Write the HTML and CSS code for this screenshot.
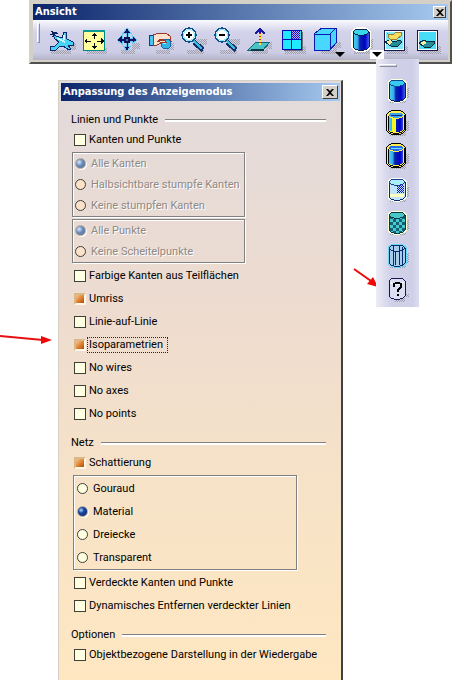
FILE: index.html
```html
<!DOCTYPE html>
<html lang="de">
<head>
  <meta charset="utf-8">
  <title>Anpassung des Anzeigemodus</title>
  <link rel="stylesheet" href="styles.css">
</head>
<body>
  <!-- Shared icon parts -->
  <svg class="defs" width="0" height="0" aria-hidden="true">
    <defs>
      <pattern id="dots" width="2" height="2" patternUnits="userSpaceOnUse">
        <path d="M0 0h1v1h-1zM1 1h1v1h-1z" fill="#a0a0aa"/>
      </pattern>
      <pattern id="checks" width="6" height="6" patternUnits="userSpaceOnUse">
        <path d="M0 0h6v6h-6z" fill="#48c8d0"/>
        <path d="M0 0h3v3h-3zM3 3h3v3h-3z" fill="#146070"/>
      </pattern>
      <pattern id="bluedots" width="2" height="2" patternUnits="userSpaceOnUse">
        <path d="M0 0h1v1h-1zM1 1h1v1h-1z" fill="#1010c8"/>
      </pattern>
      <linearGradient id="steel">
        <stop offset="0" stop-color="#48d8ff"/>
        <stop offset=".3" stop-color="#38a8e8"/>
        <stop offset=".42" stop-color="#0828a8"/>
        <stop offset=".75" stop-color="#0000c8"/>
        <stop offset="1" stop-color="#4060e0"/>
      </linearGradient>
      <path id="shade" d="M22 13h6v10h-3v5h-16v-4h13z" fill="url(#dots)"/>
      <path id="can" d="M8 8l2-2 3-1h6l3 1 2 2v15l-2 2-3 1h-6l-3-1-2-2z"/>
      <path id="rim" d="M8 8l2-2 3-1h6l3 1 2 2-2 2-3 1h-6l-3-1z"/>
    </defs>
  </svg>

  <!-- View toolbar -->
  <div class="toolbar">
    <div class="titlebar">
      <span class="title">Ansicht</span>
      <button class="close" type="button" aria-label="Ansicht schließen"><svg width="8" height="7" viewBox="0 0 8 7"><path d="M0 0h2l2 2 2-2h2L5 3.500 8 7H6L4 5 2 7H0l3-3.500z"/></svg></button>
    </div>
    <div class="tools">
      <span class="grip"></span>
      <button class="tool" type="button" aria-label="Fliegen">
        <svg viewBox="0 0 33 33"><path d="M22 17h9v7h-5v4h-20v-4h16z" fill="url(#dots)"/><path d="M5 20h5l4-4-4-3-2-4 3 1 6 2 2-6h2l1 7 6 3v3h-5l3 4-2 1-6-4-4 1-3 3h-6z" fill="#48d4f4" stroke="#102868"/><path d="M12 12l8 4M19 9v5" stroke="#c8f8ff" stroke-width="2"/><path d="M6 5l3 2 3-1M5 9l4-2 4 1M7 11l4-5" fill="none" stroke="#102060"/></svg>
      </button>
      <button class="tool" type="button" aria-label="Alles einpassen">
        <svg viewBox="0 0 33 33"><path d="M9 22h20v6h-20z" fill="url(#dots)"/><path d="M5.500 4.500h21v20h-21z" fill="#ffff9c" stroke="#008888"/><path d="M5 4h22v2h-22z" fill="#0a9a94"/><path d="M16 7l3 3h-2v3h-1v-3h-3zM16 23l3-3h-2v-3h-1v3h-3zM6 15l3-3v3h4v1h-4v2zM26 15l-3-3v3h-4v1h4v2z" fill="#080808"/></svg>
      </button>
      <button class="tool" type="button" aria-label="Schwenken">
        <svg viewBox="0 0 33 33"><path d="M21 17h8v6h-5v5h-14v-4h11z" fill="url(#dots)"/><path d="M16 2l4 5h-3v5h4V9l5 5-5 4v-3h-4v5h3l-4 5-4-5h3v-5h-4v3l-5-4 5-5v3h4V7h-3z" fill="#101060" stroke="#68c8f0"/><path d="M13 11h6v6h-6z" fill="#101050"/><path d="M15 13h2v2h-2z" fill="#3878c0"/></svg>
      </button>
      <button class="tool" type="button" aria-label="Drehen">
        <svg viewBox="0 0 33 33"><path d="M22 17h8v7h-4v4h-14v-4h10z" fill="url(#dots)"/><path d="M5 9h4v10h-4z" fill="#48c8f0" stroke="#18387c"/><path d="M9 9l6-2h7l4 3 1 5-3-2h-8l-2 2h7l1 2h-5l-4 2h-4z" fill="#ffe0cc" stroke="#a03828"/><circle cx="22" cy="18" r="5" fill="#30b4e4" stroke="#1868a8"/><path d="M19 15h3v3h-3z" fill="#9ceeff"/><path d="M14 14h7l1 2h-6z" fill="#ffe0cc" stroke="#a03828"/></svg>
      </button>
      <button class="tool" type="button" aria-label="Vergrößern">
        <svg viewBox="0 0 33 33"><path d="M19 13h11v6h-3v9h-17v-4h9z" fill="url(#dots)"/><path d="M17 16l9 8" stroke="#103070" stroke-width="5"/><path d="M17 15l8 8" stroke="#38c0d8" stroke-width="2"/><circle cx="12" cy="9" r="7" fill="#fff" stroke="#104c88" stroke-width="1.500"/><circle cx="12" cy="9" r="5.500" fill="none" stroke="#80e8f8"/><path d="M9 8h6v2h-6zM11 6h2v6h-2z"/></svg>
      </button>
      <button class="tool" type="button" aria-label="Verkleinern">
        <svg viewBox="0 0 33 33"><path d="M19 13h11v6h-3v9h-17v-4h9z" fill="url(#dots)"/><path d="M17 16l9 8" stroke="#103070" stroke-width="5"/><path d="M17 15l8 8" stroke="#38c0d8" stroke-width="2"/><circle cx="12" cy="9" r="7" fill="#fff" stroke="#104c88" stroke-width="1.500"/><circle cx="12" cy="9" r="5.500" fill="none" stroke="#80e8f8"/><path d="M9 8h6v2h-6z"/></svg>
      </button>
      <button class="tool" type="button" aria-label="Senkrechte Ansicht">
        <svg viewBox="0 0 33 33"><path d="M23 16h6v7h-4v5h-16v-4h14z" fill="url(#dots)"/><path d="M5 24l8-8h14l-7 8z" fill="#48c4c8" stroke="#106878"/><path d="M8 24h13" stroke="#083848" stroke-width="2"/><path d="M17 7v12" stroke="#ffe840" stroke-width="2"/><path d="M17 7v12" stroke="#d02818" stroke-width="2" stroke-dasharray="1 2"/><path d="M12 8l5-5 5 5M17 3v4" fill="none" stroke="#1818a0" stroke-width="1.500"/></svg>
      </button>
      <button class="tool" type="button" aria-label="Mehrfachansicht">
        <svg viewBox="0 0 33 33"><path d="M9 20h21v8h-21z" fill="url(#dots)"/><path d="M8 6h19v19h-19z" fill="#70707c"/><path d="M6 4h19v19h-19z" fill="#20e8ff" stroke="#0808b8"/><path d="M16 5h8v8h-8z" fill="#d0a0ff"/><path d="M16 5h8v8h-8z" fill="url(#bluedots)"/><path d="M15.500 4v19M6 13.500h19" stroke="#0808b8"/></svg>
      </button>
      <button class="tool" type="button" aria-label="Isometrische Ansicht">
        <svg viewBox="0 0 33 33"><path d="M24 16h8v6h-4v6h-16v-4h12z" fill="url(#dots)"/><path d="M5 8l8-6h14v15l-6 7H5z" fill="#48d8ff" stroke="#0818b0"/><path d="M5 8h16v16M21 8l6-6" fill="none" stroke="#0818b0"/></svg>
        <span class="drop"></span>
      </button>
      <button class="tool wide" type="button" aria-label="Anzeigemodus" aria-expanded="true">
        <svg viewBox="0 0 33 33"><use href="#shade"/><g transform="translate(0 -2)"><use href="#can" fill="#ffffd0" stroke="#fffff0" stroke-width="4"/><use href="#can" fill="url(#steel)" stroke="#082058"/><use href="#rim" fill="#38d8e8" stroke="#082058"/></g></svg>
        <span class="drop open"></span>
      </button>
      <button class="tool" type="button" aria-label="Verdecken/Anzeigen">
        <svg viewBox="0 0 33 33"><path d="M9 20h21v8h-21z" fill="url(#dots)"/><path d="M6 4h20v20h-20z" fill="#80e8f8" stroke="#181848"/><path d="M7 5h18v18h-18z" fill="none" stroke="#fff"/><path d="M10 8l5 1 2-2 6-1 1 3-5 4-6 1-2-2z" fill="#f8dc60" stroke="#988030"/><path d="M7 16l5-2 4 2 6-2 2 2-4 4h-7z" fill="#248c98" stroke="#082838"/><path d="M8 16l4-2 3 2-4 3z" fill="#ffe9a0"/></svg>
      </button>
      <button class="tool" type="button" aria-label="Sichtbaren Raum umschalten">
        <svg viewBox="0 0 33 33"><path d="M9 20h21v8h-21z" fill="url(#dots)"/><path d="M6 4h20v20h-20z" fill="#48dcf8" stroke="#181848"/><path d="M7 5h18v18h-18z" fill="none" stroke="#fff"/><path d="M8 17l5-3 4 2 6-1 1 2-4 4h-7z" fill="#248c98" stroke="#082838"/><path d="M9 17l4-2 3 2-4 2z" fill="#ffe9a0"/></svg>
      </button>
    </div>

    <!-- Display mode flyout -->
    <div class="flyout">
      <span class="flyout-grip"></span>
      <button class="tool" type="button" aria-label="Schattierung">
        <svg viewBox="0 0 33 33"><use href="#shade"/><use href="#can" fill="#ffffd8" stroke="#ffffe0" stroke-width="3"/><use href="#can" fill="url(#steel)" stroke="#082058"/><use href="#rim" fill="#38c8f0" stroke="#084890"/></svg>
      </button>
      <button class="tool" type="button" aria-label="Schattierung mit Kanten">
        <svg viewBox="0 0 33 33"><use href="#shade"/><g transform="translate(-1 -1)"><use href="#can" stroke="#000" stroke-width="4"/><use href="#can" fill="url(#steel)" stroke="#fff050" stroke-width="2"/><use href="#can" fill="none" stroke="#000"/><path d="M12 11h4v14h-4z" fill="#f4f820"/><use href="#rim" fill="#40a0f0" stroke="#fff050"/><path d="M11 8h11" stroke="#083080"/></g></svg>
      </button>
      <button class="tool" type="button" aria-label="Schattierung mit Kanten ohne glatte Kanten">
        <svg viewBox="0 0 33 33"><use href="#shade"/><g transform="translate(-1 -1)"><use href="#can" stroke="#000" stroke-width="4"/><use href="#can" fill="url(#steel)" stroke="#fff050" stroke-width="2"/><use href="#can" fill="none" stroke="#000"/><use href="#rim" fill="#2868e8" stroke="#fff050"/><path d="M11 8h11" stroke="#68e8ff"/></g></svg>
      </button>
      <button class="tool" type="button" aria-label="Schattierung mit verdeckten Kanten">
        <svg viewBox="0 0 33 33"><use href="#shade"/><use href="#can" fill="#d0f4ff" stroke="#fffff0" stroke-width="3"/><use href="#can" fill="#c0e4f8" stroke="#102878"/><path d="M16 11h7v8h-7z" fill="url(#bluedots)"/><path d="M9 20h14v3h-14z" fill="#ffffc0"/><use href="#rim" fill="#a8f0ff" stroke="#203c90"/></svg>
      </button>
      <button class="tool" type="button" aria-label="Schattierung mit Material">
        <svg viewBox="0 0 33 33"><use href="#shade"/><use href="#can" fill="#ffffd8" stroke="#ffffd0" stroke-width="3"/><use href="#can" fill="url(#checks)" stroke="#083848"/><use href="#rim" fill="#48c8c8" stroke="#083848"/></svg>
      </button>
      <button class="tool" type="button" aria-label="Drahtmodell">
        <svg viewBox="0 0 33 33"><use href="#shade"/><use href="#can" fill="#60d0f0" stroke="#68d8f8" stroke-width="3"/><use href="#can" fill="#a8ccec" stroke="#082868"/><path d="M12 6v19M14 11v14M18 6v19M21 7v18" stroke="#082868"/><use href="#rim" fill="none" stroke="#082868"/></svg>
      </button>
      <button class="tool" type="button" aria-label="Ansichtsparameter anpassen">
        <svg viewBox="0 0 33 33"><path d="M19 21h9v3h-4v5h-10v-3h5z" fill="url(#dots)"/><use href="#can" fill="#dcdcf2" stroke="#181850"/><path d="M9 9l3 2h8l3-2" fill="none" stroke="#f8f8ff"/><path d="M13 14v-3l2-1h3l2 1v3l-3 3v2M17 21v2" fill="none" stroke="#000" stroke-width="2"/></svg>
      </button>
    </div>
  </div>

  <!-- View mode customization dialog -->
  <form class="dialog">
    <div class="titlebar">
      <span class="title">Anpassung des Anzeigemodus</span>
      <button class="close big" type="button" aria-label="Dialog schließen"><svg width="8" height="7" viewBox="0 0 8 7"><path d="M0 0h2l2 2 2-2h2L5 3.500 8 7H6L4 5 2 7H0l3-3.500z"/></svg></button>
    </div>
    <div class="content">
      <h2 class="heading">Linien und Punkte</h2>
      <label class="row short"><input type="checkbox">Kanten und Punkte</label>
      <div class="group narrow">
        <label class="row disabled"><input type="radio" name="edges" checked disabled>Alle Kanten</label>
        <label class="row disabled"><input type="radio" name="edges" disabled>Halbsichtbare stumpfe Kanten</label>
        <label class="row disabled"><input type="radio" name="edges" disabled>Keine stumpfen Kanten</label>
      </div>
      <div class="group narrow">
        <label class="row disabled"><input type="radio" name="points" checked disabled>Alle Punkte</label>
        <label class="row disabled"><input type="radio" name="points" disabled>Keine Scheitelpunkte</label>
      </div>
      <label class="row"><input type="checkbox">Farbige Kanten aus Teilflächen</label>
      <label class="row"><input type="checkbox" checked>Umriss</label>
      <label class="row"><input type="checkbox">Linie-auf-Linie</label>
      <label class="row"><input type="checkbox" checked><span class="focused">Isoparametrien</span></label>
      <label class="row"><input type="checkbox">No wires</label>
      <label class="row"><input type="checkbox">No axes</label>
      <label class="row"><input type="checkbox">No points</label>

      <h2 class="heading spaced">Netz</h2>
      <label class="row short"><input type="checkbox" checked>Schattierung</label>
      <div class="group">
        <label class="row"><input type="radio" name="mesh">Gouraud</label>
        <label class="row"><input type="radio" name="mesh" checked>Material</label>
        <label class="row"><input type="radio" name="mesh">Dreiecke</label>
        <label class="row"><input type="radio" name="mesh">Transparent</label>
      </div>
      <label class="row"><input type="checkbox">Verdeckte Kanten und Punkte</label>
      <label class="row"><input type="checkbox">Dynamisches Entfernen verdeckter Linien</label>

      <h2 class="heading spaced">Optionen</h2>
      <label class="row short"><input type="checkbox">Objektbezogene Darstellung in der Wiedergabe</label>
    </div>
  </form>

  <!-- Pointer arrows -->
  <svg class="arrow arrow-left" width="52" height="14" viewBox="0 0 52 14"><path d="M0 4l43 4" stroke="#e81010" stroke-width="2"/><path d="M41 4l11 4-11 4z" fill="#f00808"/></svg>
  <svg class="arrow arrow-right" width="26" height="22" viewBox="0 0 26 22"><path d="M1 2l17 12" stroke="#f00808" stroke-width="2"/><path d="M20 10l5 10-11-3z" fill="#f00808"/></svg>
</body>
</html>
```
FILE: styles.css
```css
* {
  box-sizing: border-box;
}

body {
  position: relative;
  display: flex;
  flex-direction: column;
  min-height: 100vh;
  margin: 0;
  background: #fff;
  color: #000;
  font-family: Roboto, sans-serif;
  font-size: 11px;
  line-height: 14px;
}

button {
  padding: 0;
  border: none;
  background: none;
}

.defs {
  position: absolute;
}

/* title bars */
.titlebar {
  display: flex;
  align-items: center;
  justify-content: space-between;
  height: 16px;
  padding: 0 2px;
  background: linear-gradient(to right, #0a246a, #a6caf0);
  color: #fff;
}

.title {
  font-family: "DejaVu Sans Condensed", "DejaVu Sans", sans-serif;
  font-weight: bold;
  white-space: nowrap;
}

.close {
  display: flex;
  align-items: center;
  justify-content: center;
  width: 13px;
  height: 12px;
  background: #d4d0c8;
  border: 1px solid;
  border-color: #fff #404040 #404040 #fff;
}

.close.big {
  width: 16px;
  height: 14px;
}

/* toolbar */
.toolbar {
  position: relative;
  margin: 0 0 0 29px;
  padding: 2px;
  border: 2px solid;
  border-color: #d4d0c8 #505050 #505050 #d4d0c8;
  background: #d4d0c8;
}

.tools {
  display: flex;
  align-items: center;
  height: 40px;
  padding: 0 4px;
  background: linear-gradient(#fafaff, #d2d2ea 30%, #cdcde6 80%, #b4b4c8);
}

.grip {
  align-self: flex-start;
  width: 3px;
  height: 20px;
  margin: 3px 5px 0 0;
  border: 1px solid;
  border-color: #fff #8c8c9c #8c8c9c #fff;
}

.tool {
  position: relative;
  flex: none;
  width: 33px;
  height: 33px;
}

.tool.wide {
  margin-left: 3px;
}

.tool svg {
  display: block;
  width: 33px;
  height: 33px;
  shape-rendering: crispEdges;
}

.tools .tool {
  margin-top: 4px;
}

.drop {
  position: absolute;
  right: -3px;
  bottom: 2px;
  border: 5px solid transparent;
  border-top-color: #000;
  border-bottom: none;
}

.drop.open {
  right: -4px;
  outline: 2px solid #fff;
  background: #fff;
}

.flyout {
  position: absolute;
  top: 57px;
  right: 31px;
  z-index: 1;
  display: flex;
  flex-direction: column;
  align-items: center;
  width: 43px;
  padding-bottom: 1px;
  background: linear-gradient(to right, #ececf6, #d0d0e8 35%, #cfcfe8 85%, #dcdcf0);
}

.flyout-grip {
  align-self: flex-start;
  width: 18px;
  height: 3px;
  margin: 5px 3px 8px;
  border: 1px solid;
  border-color: #fff #8c8c9c #8c8c9c #fff;
}

/* dialog */
.dialog {
  flex: 1;
  margin: 16px 109px 0 58px;
  padding: 2px 1px 0 2px;
  border: 1px solid #d4d0c8;
  border-right: 2px solid #404040;
  border-bottom: none;
  background: linear-gradient(#e2dadb, #eedccf 40%, #f6e2c8 65%, #fee7c1);
}

.dialog .titlebar {
  height: 18px;
}

.content {
  padding: 9px 14px 12px 10px;
}

.heading {
  display: flex;
  align-items: center;
  gap: 7px;
  height: 20px;
  margin: 0;
  font-size: 11px;
  font-weight: normal;
}

.heading::after {
  content: "";
  flex: 1;
  height: 2px;
  border-top: 1px solid #808080;
  background: #fff;
}

.spaced {
  margin-top: 8px;
}

.row {
  display: flex;
  align-items: center;
  gap: 3px;
  height: 23px;
  padding-left: 3px;
  white-space: nowrap;
}

.row.short {
  height: 20px;
}

.row.disabled {
  height: 21px;
  padding-left: 2px;
  color: #8e8884;
  text-shadow: 1px 1px #fff;
}

.group {
  width: 224px;
  margin: 2px 0 1px 2px;
  padding-top: 1px;
  border: 1px solid #808080;
  box-shadow: 1px 1px #fff, inset 1px 1px #fff;
}

.group.narrow {
  width: 173px;
  margin-left: 1px;
  padding-top: 0;
}

.group .row {
  gap: 5px;
}

input {
  appearance: none;
  flex: none;
  width: 12px;
  height: 12px;
  margin: 0;
  border: 1px solid #404038;
  background: #ffffe1;
}

input[type="radio"] {
  width: 11px;
  height: 11px;
  border-radius: 50%;
}

input[type="checkbox"]:checked {
  border: 2px solid;
  border-color: #d8b888 #fff8e8 #fff8e8 #d8b888;
  background: linear-gradient(135deg, #f8c890, #d87828 60%, #a85010);
}

input[type="radio"]:checked {
  border: 1px solid #b8a890;
  background: radial-gradient(circle at 35% 35%, #b8d8ff, #1848a0 35%, #082468);
  box-shadow: 1px 1px #fff;
}

input[type="radio"]:disabled {
  background: #fbe2c8;
}

input[type="radio"]:checked:disabled {
  background: radial-gradient(circle at 35% 35%, #d8e8f8, #6888b8 45%, #506c9c);
}

.focused {
  margin-left: -2px;
  padding: 0 4px 0 1px;
  border: 1px dotted #402010;
}

/* arrows laid over the window */
.arrow {
  position: absolute;
}

.arrow-left {
  top: 332px;
  left: 0;
}

.arrow-right {
  top: 267px;
  right: 73px;
}
```
